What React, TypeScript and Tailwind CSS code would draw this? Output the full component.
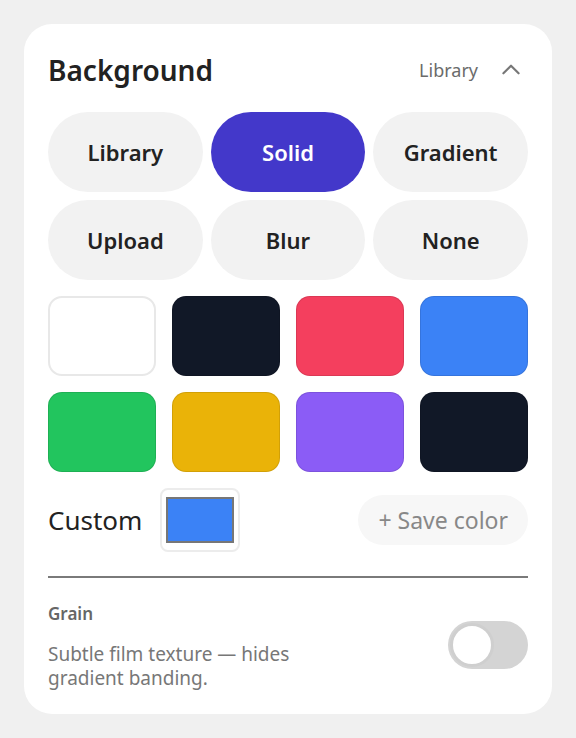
const modes = ["Library", "Solid", "Gradient", "Upload", "Blur", "None"]

const swatches = [
  "bg-[#ffffff] border-2 border-[#e8e8e8]",
  "bg-[#111827] border border-black/10",
  "bg-[#f43f5e] border border-black/10",
  "bg-[#3b82f6] border border-black/10",
  "bg-[#22c55e] border border-black/10",
  "bg-[#eab308] border border-black/10",
  "bg-[#8b5cf6] border border-black/10",
  "bg-[#111827] border border-black/10",
]

export default function App() {
  const active = "Solid"

  return (
    <div className="min-h-[738px] bg-[#f0f0f0] p-6 font-['Noto_Sans',sans-serif]">
      <div className="rounded-[28px] bg-white px-6 pt-6 pb-6">
        <div className="-mt-[10px] flex h-[64px] items-center justify-between">
          <h2 className="text-[28px] font-semibold text-[#222]">Background</h2>
          <div className="flex items-center gap-5 pr-1">
            <span className="text-[18px] text-[#6b6b6b]">Library</span>
            <svg width="26" height="26" viewBox="0 0 24 24" fill="none" stroke="#777" strokeWidth="2" strokeLinecap="round" strokeLinejoin="round">
              <path d="M5 15l7-7 7 7" />
            </svg>
          </div>
        </div>

        <div className="mt-[10px] grid grid-cols-3 gap-2">
          {modes.map((m) => (
            <button
              key={m}
              className={`h-[80px] rounded-full text-[22px] font-semibold ${
                m === active ? "bg-[#4338ca] text-white" : "bg-[#f2f2f2] text-[#222]"
              }`}
            >
              {m}
            </button>
          ))}
        </div>

        <div className="mt-4 grid grid-cols-4 gap-4">
          {swatches.map((s, i) => (
            <div key={i} className={`h-[80px] rounded-[14px] ${s}`} />
          ))}
        </div>

        <div className="mt-4 flex items-center justify-between">
          <div className="flex items-center gap-[18px]">
            <span className="text-[26px] text-[#222]">Custom</span>
            <div className="flex h-[64px] w-[80px] items-center justify-center rounded-lg border-2 border-[#ececec] bg-white">
              <div className="h-[46px] w-[68px] border-2 border-[#777] bg-[#3b82f6]" />
            </div>
          </div>
          <button className="h-[50px] rounded-full bg-[#f7f7f7] px-5 text-[23px] text-[#888]">
            + Save color
          </button>
        </div>

        <div className="mt-6 h-[2px] bg-[#7a7a7a]" />

        <div className="mt-6 flex items-start justify-between">
          <div>
            <div className="text-[17px] leading-6 font-semibold text-[#666]">Grain</div>
            <p className="mt-4 w-[280px] text-[19px] leading-6 text-[#777]">
              Subtle film texture — hides gradient banding.
            </p>
          </div>
          <div className="mt-[19px] flex h-[48px] w-[80px] items-center rounded-full bg-[#d4d4d4] p-[2px]">
            <div className="h-[44px] w-[44px] rounded-full border-[3px] border-[#cfcfcf] bg-white" />
          </div>
        </div>
      </div>
    </div>
  )
}
